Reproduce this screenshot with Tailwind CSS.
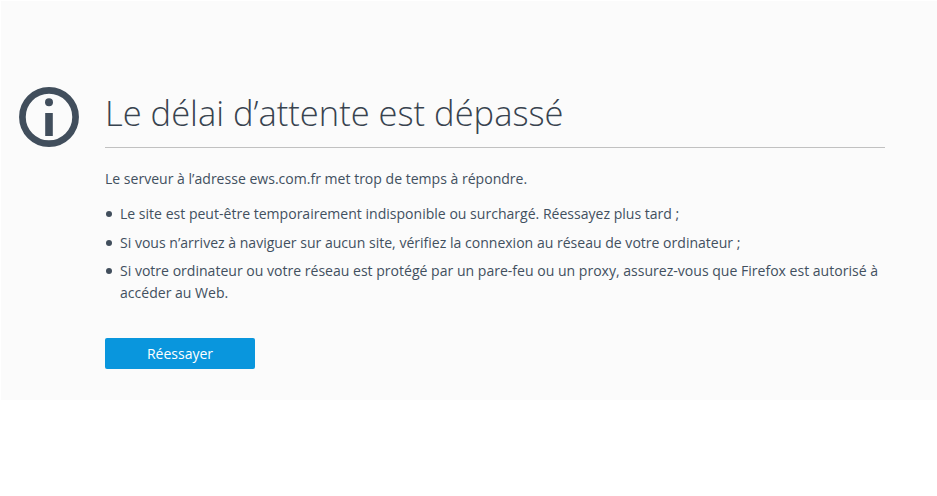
<!DOCTYPE html>
<html lang="fr"><head><meta charset="utf-8"><script src="https://cdn.jsdelivr.net/npm/@tailwindcss/browser@4"></script></head>
<body class="bg-white overflow-hidden font-['Open_Sans','Noto_Sans',sans-serif]">
<main class="w-[936px] h-[399px] mt-[1px] ml-[1px] bg-[#fbfbfb] pt-[86px] flex gap-[26px] pl-[18px] text-[#42505f]">
<svg class="w-[60px] h-[60px] shrink-0" viewBox="0 0 60 60"><circle cx="30" cy="30" r="26.6" fill="none" stroke="#414e5c" stroke-width="6.7"/><circle cx="30" cy="15.2" r="4" fill="#414e5c"/><rect x="26.2" y="26" width="7.6" height="23" fill="#414e5c"/></svg>
<div class="w-[780px]">
<h1 class="text-[34.5px] leading-[50px] font-light text-[#38434f] pt-[1px] pb-[9px] border-b border-[#c1c1c1]">Le délai d’attente est dépassé</h1>
<p class="text-[14.05px] leading-[20px] mt-[21px]">Le serveur à l’adresse ews.com.fr met trop de temps à répondre.</p>
<ul class="text-[14.05px] leading-[22px] mt-[14px] flex flex-col gap-[6.5px]">
<li class="flex"><span class="w-[6px] h-[6px] rounded-full bg-[#414e5c] mt-[8px] ml-[1px] mr-[8px] shrink-0"></span><span>Le site est peut-être temporairement indisponible ou surchargé. Réessayez plus tard ;</span></li>
<li class="flex"><span class="w-[6px] h-[6px] rounded-full bg-[#414e5c] mt-[8px] ml-[1px] mr-[8px] shrink-0"></span><span>Si vous n’arrivez à naviguer sur aucun site, vérifiez la connexion au réseau de votre ordinateur ;</span></li>
<li class="flex"><span class="w-[6px] h-[6px] rounded-full bg-[#414e5c] mt-[8px] ml-[1px] mr-[8px] shrink-0"></span><span>Si votre ordinateur ou votre réseau est protégé par un pare-feu ou un proxy, assurez-vous que Firefox est autorisé à accéder au Web.</span></li>
</ul>
<button class="block mt-[34px] w-[150px] h-[31px] rounded-[2px] bg-[#0996dd] text-white text-[14px]">Réessayer</button>
</div>
</main>
</body></html>
